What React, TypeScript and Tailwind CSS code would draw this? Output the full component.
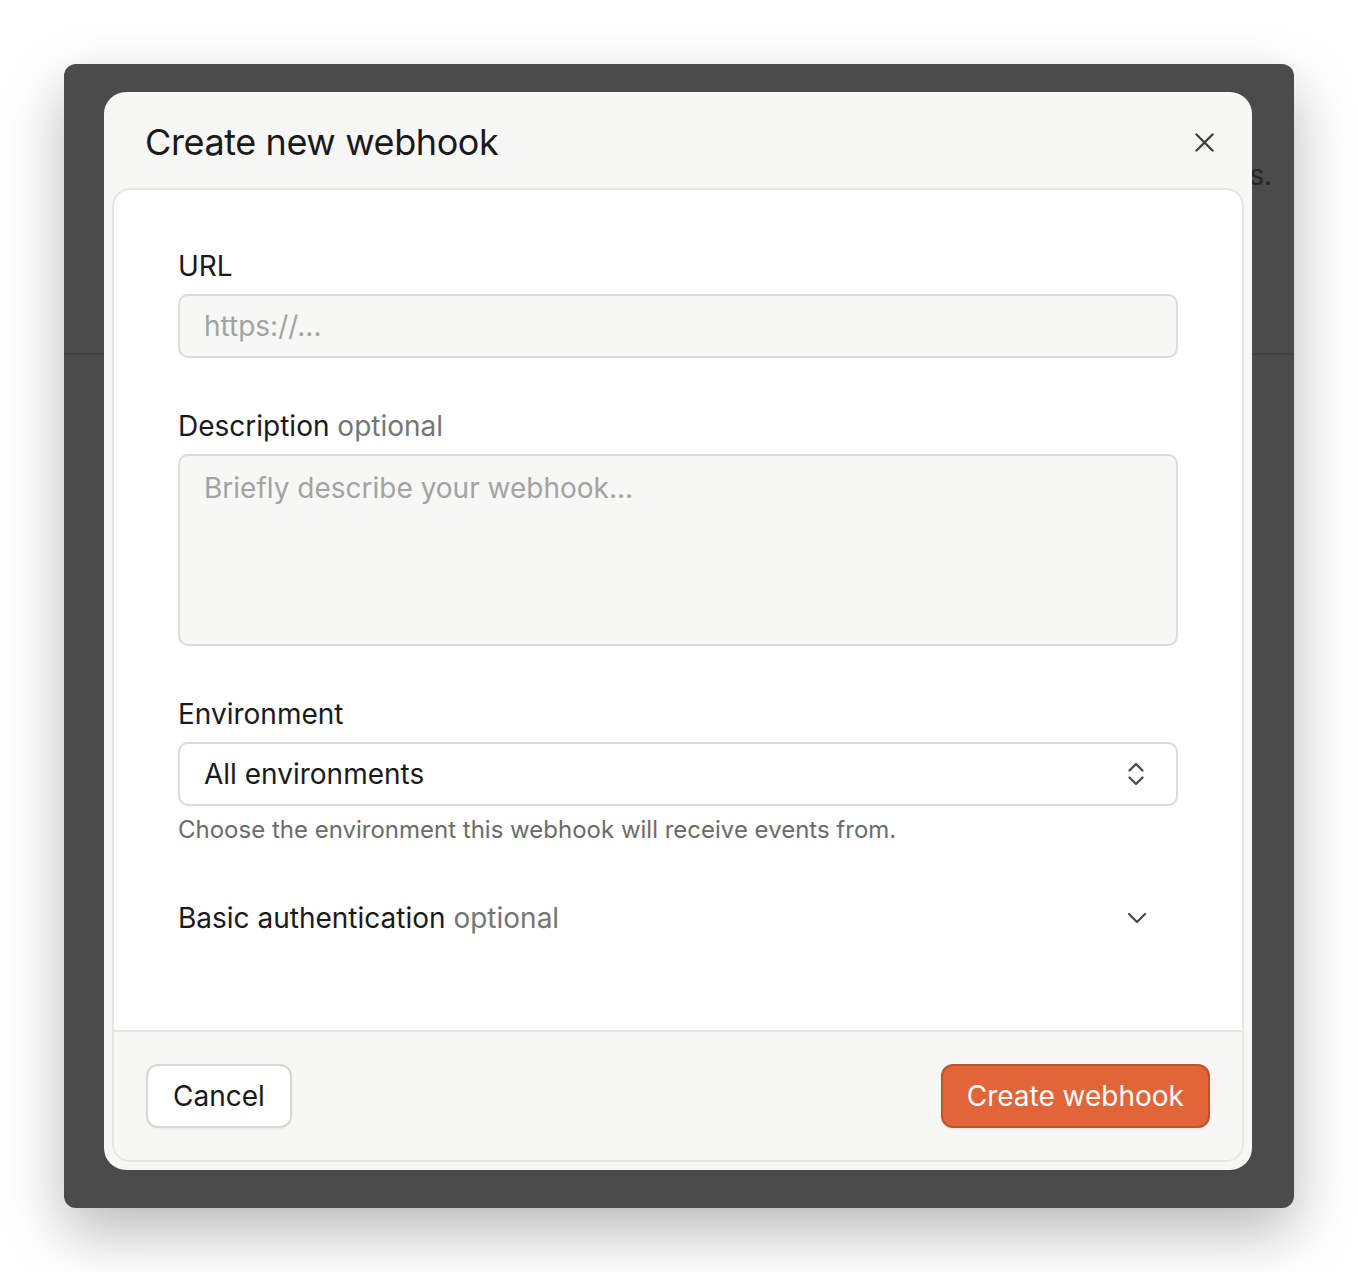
import { useState } from 'react';

export default function App() {
  const [url, setUrl] = useState('');
  const [description, setDescription] = useState('');
  const [authOpen, setAuthOpen] = useState(false);

  return (
    <div
      className="min-h-[1272px] bg-white p-16"
      style={{ fontFamily: 'Inter, "Noto Sans", sans-serif' }}
    >
      {/* Dimmed app window behind the dialog */}
      <div className="relative h-[1144px] overflow-hidden rounded-[12px] bg-[#4b4b4b] shadow-[0_24px_60px_rgba(0,0,0,0.28)]">
        <div className="h-[291px] border-b-2 border-[#434343]">
          <div className="flex justify-end pr-[22px] pt-[91px]">
            <p className="text-[28px] leading-[40px] text-[#262626]">
              Webhooks notify your endpoints when events happen in your projects.
            </p>
          </div>
        </div>

        {/* Dialog */}
        <div className="absolute left-10 top-7 flex h-[1078px] w-[1148px] flex-col rounded-[22px] bg-[#f7f7f5]">
          {/* Header */}
          <div className="flex h-[96px] items-center justify-between pl-[41px] pr-[28px] pt-1">
            <h2 className="text-[36px] font-normal leading-[44px] tracking-[-0.4px] text-[#1a1a1a]">Create new webhook</h2>
            <button className="flex h-10 w-10 items-center justify-center">
              <svg width="19" height="19" viewBox="0 0 19 19" fill="none" stroke="#3f3f3f" strokeWidth={2.4} strokeLinecap="round">
                <path d="M1.5 1.5L17.5 17.5M17.5 1.5L1.5 17.5" />
              </svg>
            </button>
          </div>

          {/* Card */}
          <div className="mx-2 mb-2 flex flex-1 flex-col overflow-hidden rounded-[18px] border-2 border-[#e6e6e3] bg-white">
            <div className="flex flex-1 flex-col px-16 pt-[58px]">
              {/* URL */}
              <label className="text-[28px] leading-[36px] text-[#1a1a1a]">URL</label>
              <input
                value={url}
                onChange={(e) => setUrl(e.target.value)}
                placeholder="https://..."
                className="mt-[10px] h-16 w-full rounded-[10px] border-2 border-[#dcdcd8] bg-[#f7f7f5] pl-6 text-[28px] text-[#1a1a1a] outline-none placeholder:text-[#a3a3a3]"
              />

              {/* Description */}
              <label className="mt-[50px] text-[28px] leading-[36px] text-[#1a1a1a]">
                Description <span className="text-[#757575]">optional</span>
              </label>
              <textarea
                value={description}
                onChange={(e) => setDescription(e.target.value)}
                placeholder="Briefly describe your webhook..."
                className="mt-[10px] h-[192px] w-full resize-none rounded-[10px] border-2 border-[#dcdcd8] bg-[#f7f7f5] pl-6 pt-[14px] text-[28px] leading-[36px] text-[#1a1a1a] outline-none placeholder:text-[#a3a3a3]"
              />

              {/* Environment */}
              <label className="mt-[50px] text-[28px] leading-[36px] text-[#1a1a1a]">Environment</label>
              <button className="mt-[10px] flex h-16 w-full items-center justify-between rounded-[10px] border-2 border-[#dcdcd8] bg-white pl-[24px] pr-[32px] shadow-[0_1px_2px_rgba(0,0,0,0.04)]">
                <span className="text-[28px] text-[#1a1a1a]">All environments</span>
                <svg width="16" height="24" viewBox="0 0 16 24" fill="none" stroke="#4a4a4a" strokeWidth={2.3} strokeLinecap="round" strokeLinejoin="round">
                  <path d="M1.5 8.5L8 2L14.5 8.5" />
                  <path d="M1.5 15.5L8 22L14.5 15.5" />
                </svg>
              </button>
              <p className="mt-2 text-[24px] leading-[32px] text-[#6b6b6b]">
                Choose the environment this webhook will receive events from.
              </p>

              {/* Basic auth */}
              <button
                onClick={() => setAuthOpen(!authOpen)}
                className="mt-[54px] flex w-full items-center justify-between pr-[31px] text-left"
              >
                <span className="text-[28px] leading-[36px] text-[#1a1a1a]">
                  Basic authentication <span className="text-[#757575]">optional</span>
                </span>
                <svg
                  width="20"
                  height="12"
                  viewBox="0 0 20 12"
                  fill="none"
                  stroke="#4a4a4a"
                  strokeWidth={2.3}
                  strokeLinecap="round"
                  strokeLinejoin="round"
                  className={authOpen ? 'rotate-180' : ''}
                >
                  <path d="M2 2L10 10L18 2" />
                </svg>
              </button>
            </div>

            {/* Footer */}
            <div className="flex items-center justify-between border-t-2 border-[#e6e6e3] bg-[#f7f7f5] p-8">
              <button className="h-16 rounded-[12px] border-2 border-[#d8d8d4] bg-white px-[25px] text-[28px] text-[#1a1a1a] shadow-[0_1px_2px_rgba(0,0,0,0.05)]">
                Cancel
              </button>
              <button className="h-16 rounded-[12px] border-2 border-[#bf532d] bg-[#e26439] px-[24px] text-[28px] text-white shadow-[0_1px_2px_rgba(0,0,0,0.08)]">
                Create webhook
              </button>
            </div>
          </div>
        </div>
      </div>
    </div>
  );
}
